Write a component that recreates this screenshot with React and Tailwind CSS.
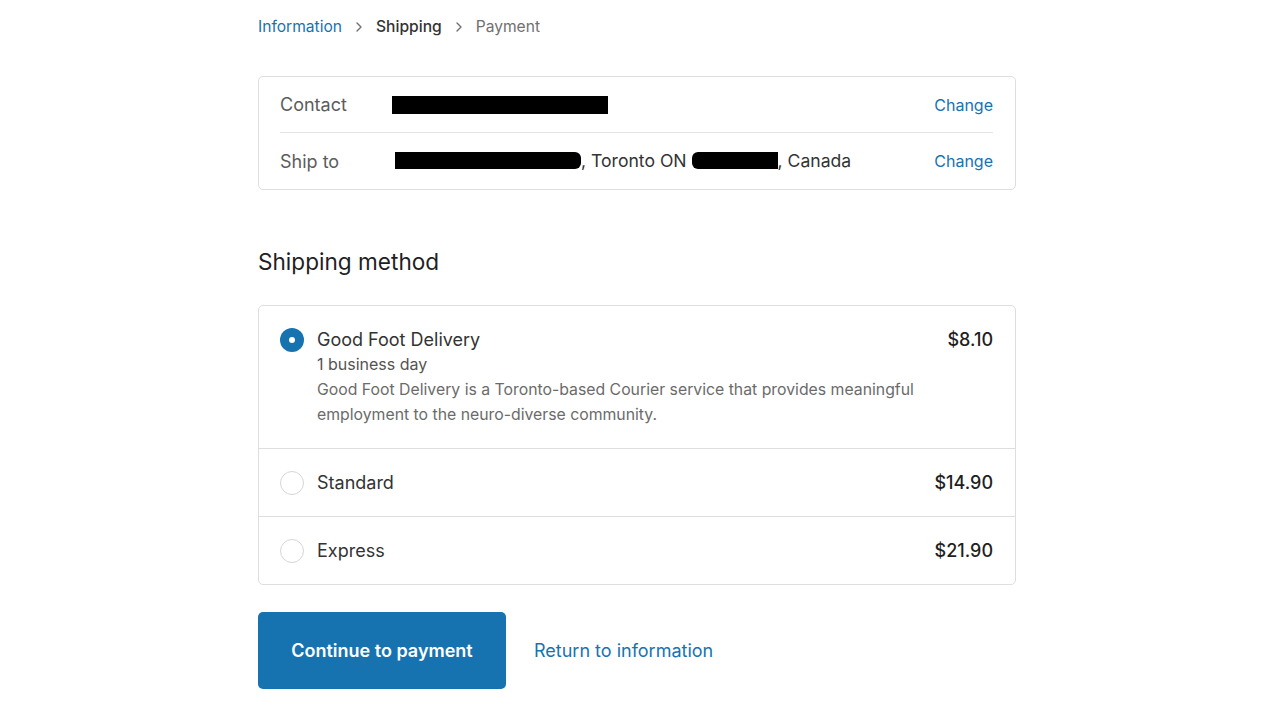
import { ChevronRight } from "lucide-react";

const methods = [
  {
    name: "Good Foot Delivery",
    price: "$8.10",
    selected: true,
    eta: "1 business day",
    desc: "Good Foot Delivery is a Toronto-based Courier service that provides meaningful employment to the neuro-diverse community.",
  },
  { name: "Standard", price: "$14.90" },
  { name: "Express", price: "$21.90" },
];

function Radio({ checked }) {
  if (checked) {
    return (
      <span className="w-6 h-6 rounded-full bg-[#1773b0] flex items-center justify-center shrink-0">
        <span className="w-[6px] h-[6px] rounded-full bg-white" />
      </span>
    );
  }
  return <span className="w-6 h-6 rounded-full border border-[#d6d6d6] bg-white shrink-0" />;
}

export default function App() {
  return (
    <div className="min-h-[720px] bg-white font-['Inter','Liberation_Sans',sans-serif] text-[#333333]">
      <div className="ml-[258px] w-[758px] pt-[15px]">
        {/* Breadcrumb */}
        <nav className="flex items-center text-[15.6px] leading-6">
          <span className="text-[#1773b0]">Information</span>
          <ChevronRight className="w-4 h-4 mx-[9px] text-[#707070]" strokeWidth={2} />
          <span className="font-medium text-[#333]">Shipping</span>
          <ChevronRight className="w-4 h-4 mx-[9px] text-[#707070]" strokeWidth={2} />
          <span className="text-[#707070]">Payment</span>
        </nav>

        {/* Contact / ship to */}
        <div className="mt-[37px] border border-[#dedede] rounded-[5px] pl-[21px] pr-[22px]">
          <div className="flex items-center h-[56px] border-b border-[#e3e3e3] text-[18px]">
            <span className="w-[112px] text-[#5c5c5c]">Contact</span>
            <span className="flex-1 flex items-center">
              <span className="inline-block w-[216px] h-[18px] bg-black" />
            </span>
            <span className="text-[16px] text-[#1773b0]">Change</span>
          </div>
          <div className="flex items-center h-[56px] text-[17.6px]">
            <span className="w-[112px] text-[18px] text-[#5c5c5c]">Ship to</span>
            <span className="flex-1 flex items-center text-[#333]">
              <span className="inline-block ml-[3px] w-[186px] h-[17px] bg-black rounded-r-[6px]" />
              <span>, Toronto ON&nbsp;</span>
              <span className="inline-block w-[86px] h-[17px] bg-black rounded-l-[6px]" />
              <span>, Canada</span>
            </span>
            <span className="text-[16px] text-[#1773b0]">Change</span>
          </div>
        </div>

        {/* Shipping method */}
        <h2 className="mt-[57px] text-[22.6px] leading-[30px] text-[#1f1f1f]">Shipping method</h2>

        <div className="mt-[28px] border border-[#dedede] rounded-[5px]">
          {methods.map((m, i) => (
            <div
              key={m.name}
              className={`flex items-start pl-[21px] pr-[22px] pt-[22px] pb-[21px] ${i > 0 ? "border-t border-[#dedede]" : ""}`}
            >
              <Radio checked={m.selected} />
              <div className="flex-1 ml-[13px]">
                <div className="text-[18px] leading-6 text-[#333]">{m.name}</div>
                {m.eta && (
                  <div className="text-[16px] leading-[25px] text-[#545454]">{m.eta}</div>
                )}
                {m.desc && (
                  <div className="text-[15.8px] leading-[25px] text-[#6b6b6b] w-[620px]">{m.desc}</div>
                )}
              </div>
              <span className="text-[18px] leading-6 font-medium text-[#1f1f1f]">{m.price}</span>
            </div>
          ))}
        </div>

        {/* Actions */}
        <div className="mt-[27px] flex items-center">
          <button className="w-[248px] h-[77px] rounded-[5px] bg-[#1773b0] text-white text-[18px] font-semibold">
            Continue to payment
          </button>
          <span className="ml-[28px] text-[18px] text-[#1773b0]">Return to information</span>
        </div>
      </div>
    </div>
  );
}
